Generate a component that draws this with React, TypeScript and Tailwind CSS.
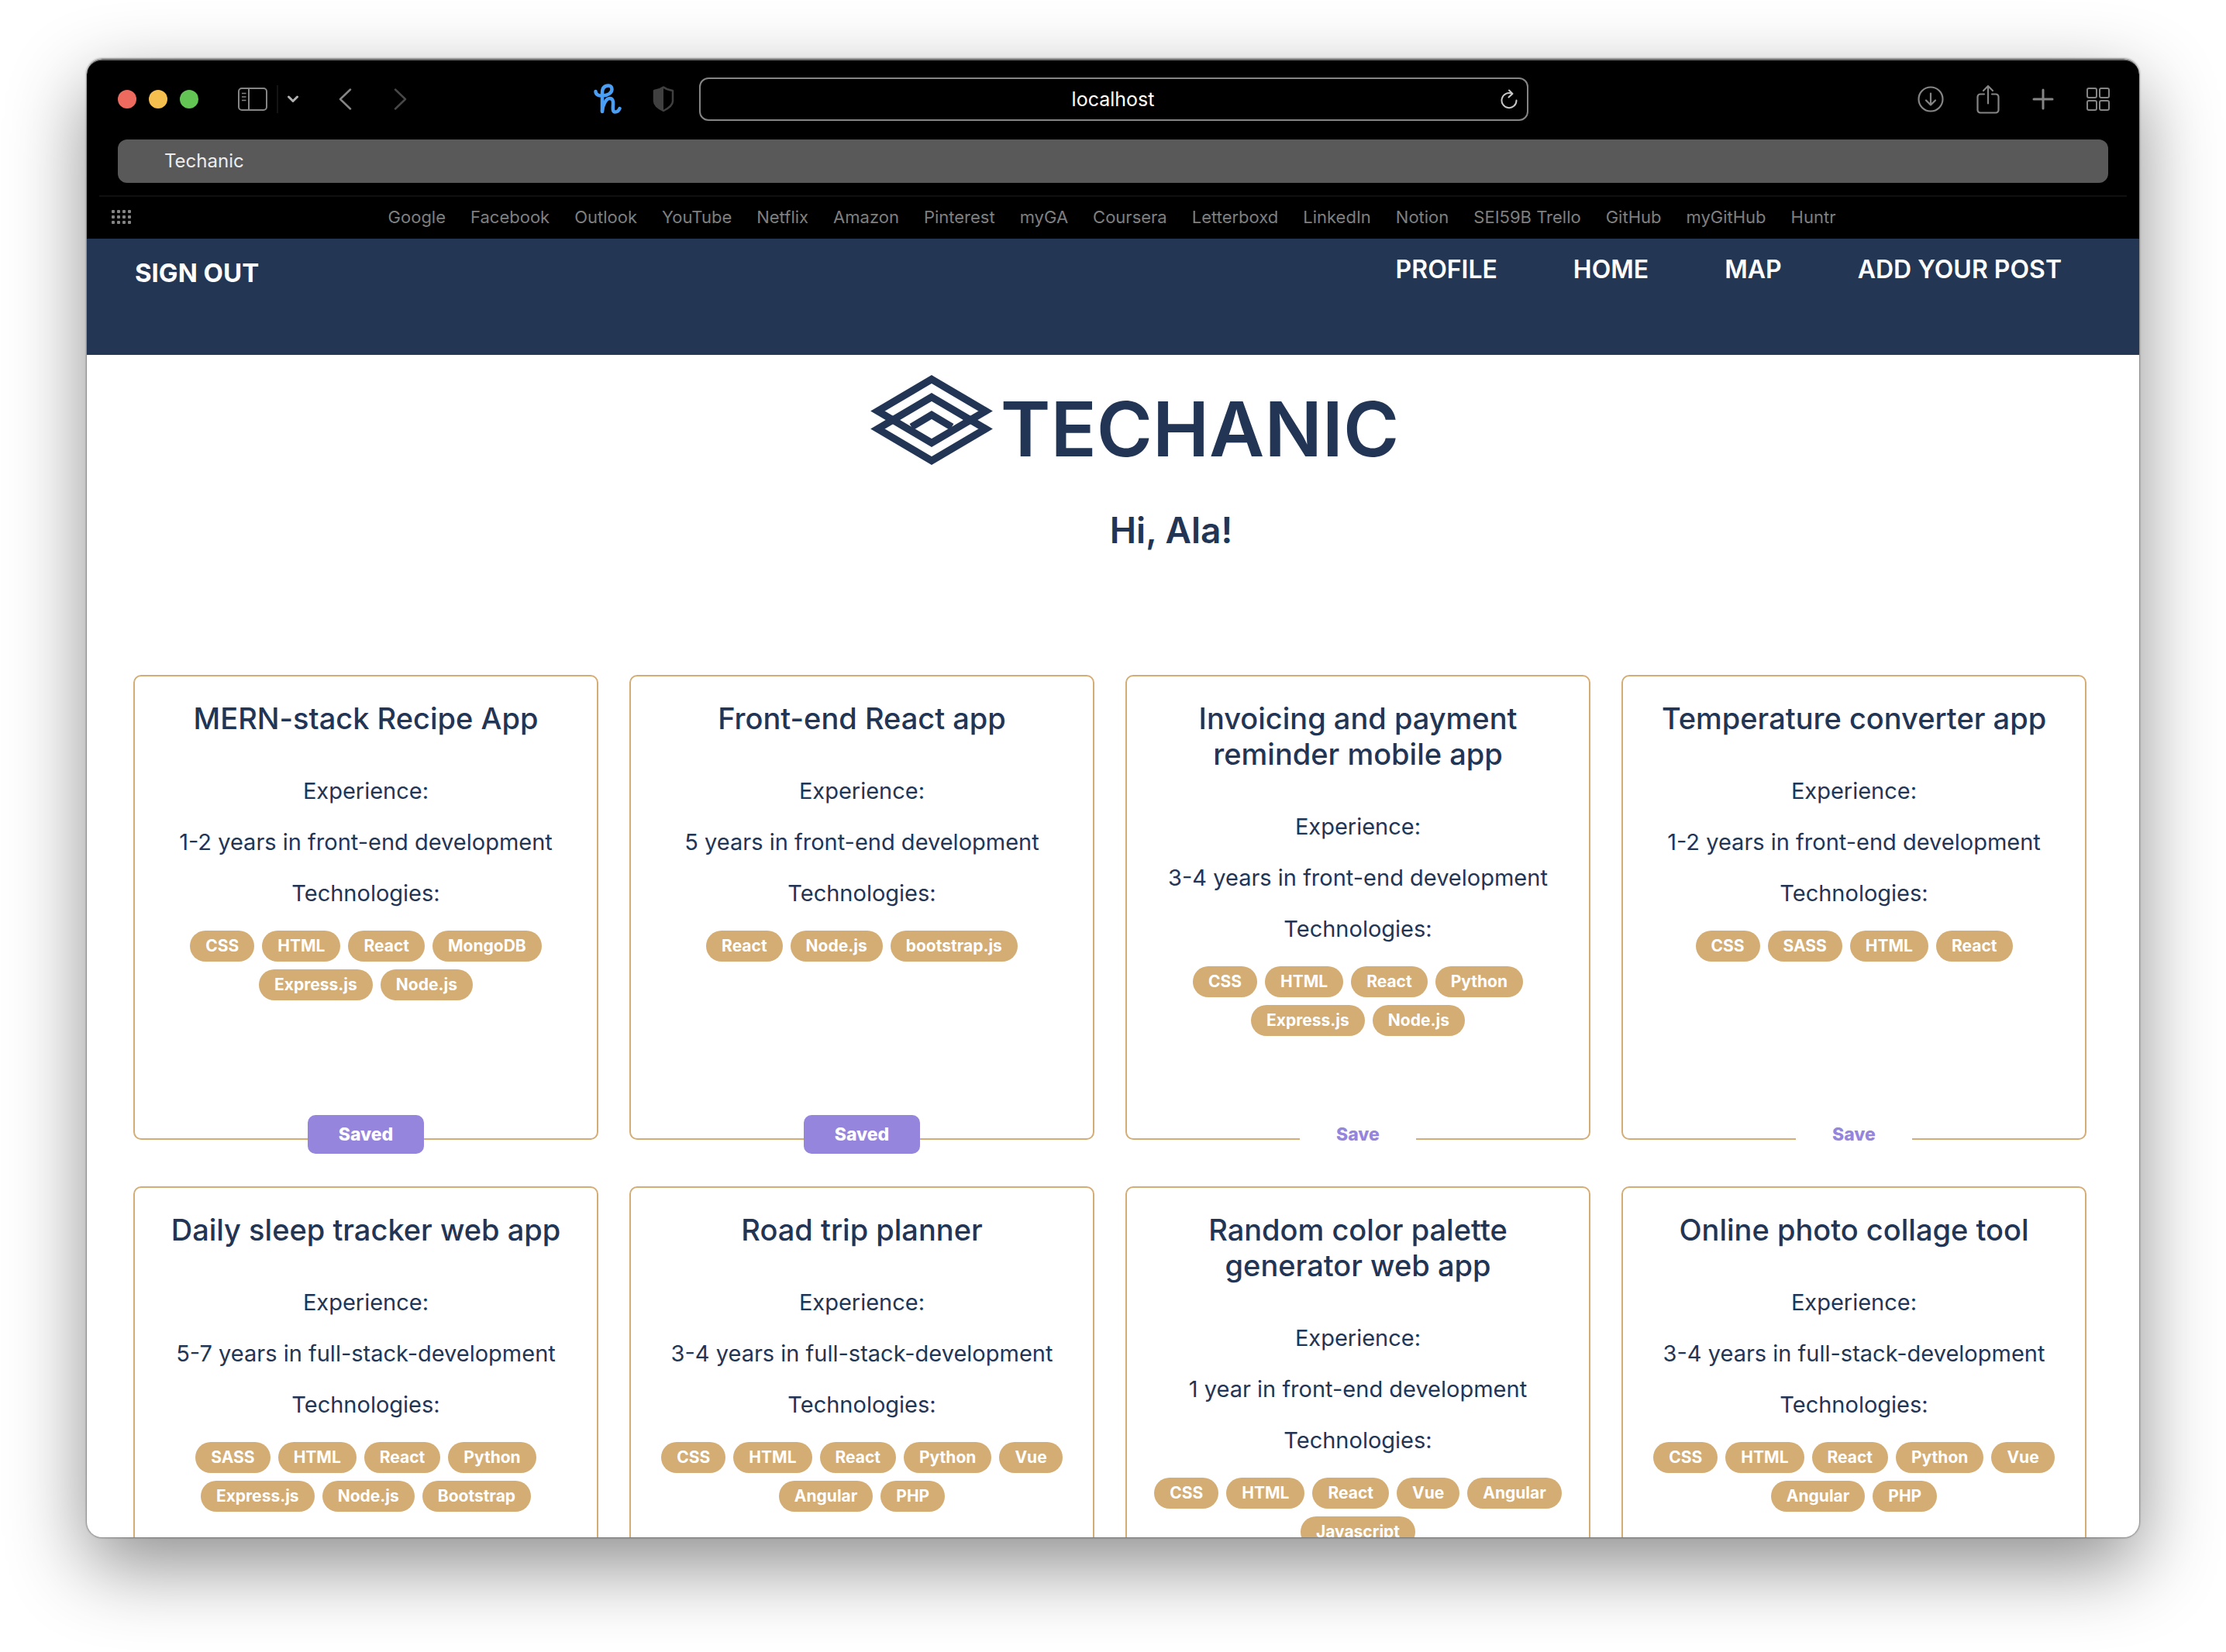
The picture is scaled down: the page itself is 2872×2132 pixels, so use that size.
import { useState } from "react";

type Post = {
  title: string;
  experience: string;
  technologies: string[];
  saved: boolean;
};

const bookmarks = [
  "Google",
  "Facebook",
  "Outlook",
  "YouTube",
  "Netflix",
  "Amazon",
  "Pinterest",
  "myGA",
  "Coursera",
  "Letterboxd",
  "LinkedIn",
  "Notion",
  "SEI59B Trello",
  "GitHub",
  "myGitHub",
  "Huntr",
];

const posts: Post[] = [
  {
    title: "MERN-stack Recipe App",
    experience: "1-2 years in front-end development",
    technologies: ["CSS", "HTML", "React", "MongoDB", "Express.js", "Node.js"],
    saved: true,
  },
  {
    title: "Front-end React app",
    experience: "5 years in front-end development",
    technologies: ["React", "Node.js", "bootstrap.js"],
    saved: true,
  },
  {
    title: "Invoicing and payment reminder mobile app",
    experience: "3-4 years in front-end development",
    technologies: ["CSS", "HTML", "React", "Python", "Express.js", "Node.js"],
    saved: false,
  },
  {
    title: "Temperature converter app",
    experience: "1-2 years in front-end development",
    technologies: ["CSS", "SASS", "HTML", "React"],
    saved: false,
  },
  {
    title: "Daily sleep tracker web app",
    experience: "5-7 years in full-stack-development",
    technologies: ["SASS", "HTML", "React", "Python", "Express.js", "Node.js", "Bootstrap"],
    saved: false,
  },
  {
    title: "Road trip planner",
    experience: "3-4 years in full-stack-development",
    technologies: ["CSS", "HTML", "React", "Python", "Vue", "Angular", "PHP"],
    saved: false,
  },
  {
    title: "Random color palette generator web app",
    experience: "1 year in front-end development",
    technologies: ["CSS", "HTML", "React", "Vue", "Angular", "Javascript"],
    saved: false,
  },
  {
    title: "Online photo collage tool",
    experience: "3-4 years in full-stack-development",
    technologies: ["CSS", "HTML", "React", "Python", "Vue", "Angular", "PHP"],
    saved: false,
  },
];

function SidebarIcon() {
  return (
    <svg width="38" height="30" viewBox="0 0 38 30" fill="none" stroke="#858585" strokeWidth="2">
      <rect x="1" y="1" width="36" height="28" rx="4" />
      <path d="M14 1v28" />
      <path d="M5 7.500h5.500M5 12h5.500M5 16.500h5.500" strokeWidth="1.500" />
    </svg>
  );
}

function SmallChevron() {
  return (
    <svg width="14" height="10" viewBox="0 0 14 10" fill="none" stroke="#b0b0b0" strokeWidth="3" strokeLinecap="round" strokeLinejoin="round">
      <path d="M1.500 2 7 7.500 12.500 2" />
    </svg>
  );
}

function BackIcon() {
  return (
    <svg width="17" height="28" viewBox="0 0 17 28" fill="none" stroke="#858585" strokeWidth="2.500" strokeLinecap="round" strokeLinejoin="round">
      <path d="M15 1.500 2 14l13 12.500" />
    </svg>
  );
}

function ForwardIcon() {
  return (
    <svg width="17" height="28" viewBox="0 0 17 28" fill="none" stroke="#474747" strokeWidth="2.500" strokeLinecap="round" strokeLinejoin="round">
      <path d="M2 1.500 15 14 2 26.500" />
    </svg>
  );
}

function HoneyIcon() {
  return (
    <svg width="36" height="40" viewBox="0 0 36 40" fill="none" stroke="#4a9ff5" strokeLinecap="round" strokeLinejoin="round">
      <path d="M2.500 10c0 4 4 6 9.500 5.500 7-.6 11.500-4 11.500-8.500 0-3-2-4.500-4.500-4.500C13.500 2.500 11 6 11 12v24" strokeWidth="4.500" />
      <path d="M11 35c1-8 5-16 9.500-16 4 0 4.800 3 4.500 8-.3 5-.8 9.500 2.500 9.500 3 0 5-2 6-4.500" strokeWidth="4.500" />
    </svg>
  );
}

function ShieldIcon() {
  return (
    <svg width="28" height="34" viewBox="0 0 28 34">
      <path
        d="M14 1.500c4 3 8 4 12 4.500v13.500c0 6-7 10-12 12.500C9 29.500 2 25.500 2 19.500V6c4-.5 8-1.500 12-4.500Z"
        fill="none"
        stroke="#404040"
        strokeWidth="2.500"
        strokeLinejoin="round"
      />
      <path d="M14 1.500V32C9 29.500 2 25.500 2 19.500V6c4-.5 8-1.500 12-4.500Z" fill="#404040" />
    </svg>
  );
}

function ReloadIcon() {
  return (
    <svg width="22" height="26" viewBox="0 0 22 26" fill="none" stroke="#c8c8c8" strokeWidth="2" strokeLinecap="round" strokeLinejoin="round">
      <path d="M20.500 14.500A9.500 9.500 0 1 1 15 6" />
      <path d="M11 1.500 15.500 6 10.500 10.500" />
    </svg>
  );
}

function DownloadIcon() {
  return (
    <svg width="34" height="34" viewBox="0 0 34 34" fill="none" stroke="#858585" strokeWidth="2.200" strokeLinecap="round" strokeLinejoin="round">
      <circle cx="17" cy="17" r="15.500" />
      <path d="M17 9.500v15M11 18.500l6 6 6-6" />
    </svg>
  );
}

function ShareIcon() {
  return (
    <svg width="30" height="38" viewBox="0 0 30 38" fill="none" stroke="#858585" strokeWidth="2.200" strokeLinecap="round" strokeLinejoin="round">
      <path d="M10 12.500H5a3.500 3.500 0 0 0-3.500 3.500v17A3.500 3.500 0 0 0 5 36.500h20a3.500 3.500 0 0 0 3.500-3.500V16a3.500 3.500 0 0 0-3.500-3.500h-5" />
      <path d="M15 24.500V2M9 8l6-6 6 6" />
    </svg>
  );
}

function PlusIcon() {
  return (
    <svg width="28" height="28" viewBox="0 0 28 28" fill="none" stroke="#858585" strokeWidth="3" strokeLinecap="round">
      <path d="M14 2v24M2 14h24" />
    </svg>
  );
}

function TabsIcon() {
  return (
    <svg width="30" height="30" viewBox="0 0 30 30" fill="none" stroke="#858585" strokeWidth="2">
      <rect x="1" y="1" width="12" height="12" rx="2" />
      <rect x="17" y="1" width="12" height="12" rx="2" />
      <rect x="1" y="17" width="12" height="12" rx="2" />
      <rect x="17" y="17" width="12" height="12" rx="2" />
    </svg>
  );
}

function DotsIcon() {
  return (
    <svg width="25" height="18" viewBox="0 0 25 18" fill="#858585">
      {[0, 7, 14].map((y) => [0, 7, 14, 21].map((x) => <rect key={`${x}-${y}`} x={x} y={y} width="4" height="4" rx="1" />))}
    </svg>
  );
}

function LogoMark() {
  return (
    <svg width="158" height="116" viewBox="0 0 158 116" fill="none" stroke="#223555" strokeWidth="9.500" strokeMiterlimit="10">
      <path d="M79 5.500 148.500 46.500 79 87.500 9.500 46.500Z" />
      <path d="M79 28.500 148.500 69.500 79 110.500 9.500 69.500Z" />
      <path d="M53 67 79 51.500 105 67" />
    </svg>
  );
}

function Toolbar() {
  return (
    <div className="flex h-[102px] items-center pr-[38px] pb-0.5 pl-10">
      <div className="flex flex-1 items-center">
        <div className="flex gap-4">
          <button aria-label="Close window" className="size-6 rounded-full bg-[#ed6a5e]" />
          <button aria-label="Minimise window" className="size-6 rounded-full bg-[#f5bf4f]" />
          <button aria-label="Zoom window" className="size-6 rounded-full bg-[#62c554]" />
        </div>
        <button aria-label="Toggle sidebar" className="ml-[51px]">
          <SidebarIcon />
        </button>
        <span className="ml-3 h-9 w-0.5 bg-[#141414]" />
        <button aria-label="Sidebar options" className="ml-3">
          <SmallChevron />
        </button>
        <button aria-label="Back" className="ml-[52px]">
          <BackIcon />
        </button>
        <button aria-label="Forward" className="ml-[54px]">
          <ForwardIcon />
        </button>
        <button aria-label="Honey" className="ml-auto">
          <HoneyIcon />
        </button>
        <button aria-label="Privacy report" className="mr-8 ml-10">
          <ShieldIcon />
        </button>
      </div>
      <div className="flex h-14 w-[1070px] items-center rounded-xl border-2 border-[#858585] pr-3 pl-8">
        <input
          aria-label="Address"
          defaultValue="localhost"
          className="w-full min-w-0 flex-1 bg-transparent pt-0.5 text-center text-[25px] text-white outline-none"
        />
        <button aria-label="Reload">
          <ReloadIcon />
        </button>
      </div>
      <div className="flex flex-1 items-center justify-end gap-[42px]">
        <button aria-label="Downloads">
          <DownloadIcon />
        </button>
        <button aria-label="Share">
          <ShareIcon />
        </button>
        <button aria-label="New tab">
          <PlusIcon />
        </button>
        <button aria-label="Show all tabs">
          <TabsIcon />
        </button>
      </div>
    </div>
  );
}

function BrowserChrome() {
  return (
    <header className="rounded-t-[20px] border-t-2 border-[#6b6b6b] bg-black">
      <Toolbar />
      <div className="px-10">
        <button className="flex h-14 w-full items-center rounded-xl bg-[#595959] pl-[60px] text-2xl text-[#ececec]">Techanic</button>
      </div>
      <div className="mx-4 mt-4 border-t-2 border-[#101010]" />
      <div className="flex h-[54px] items-center px-8 pb-0.5">
        <button aria-label="Show bookmarks">
          <DotsIcon />
        </button>
        <nav className="flex flex-1 justify-center gap-8 pr-7 text-[22px] text-[#7f7f7f]">
          {bookmarks.map((name) => (
            <a key={name} href="#">
              {name}
            </a>
          ))}
        </nav>
      </div>
    </header>
  );
}

function SiteNav() {
  return (
    <nav className="flex h-[150px] items-start justify-between bg-[#233654] pr-[100px] pl-[62px] text-white">
      <a href="#" className="mt-6 text-[33px] leading-10 font-bold">
        SIGN OUT
      </a>
      <div className="mt-5 flex gap-[98px] text-[32px] leading-10 font-semibold">
        <a href="#">PROFILE</a>
        <a href="#">HOME</a>
        <a href="#">MAP</a>
        <a href="#">ADD YOUR POST</a>
      </div>
    </nav>
  );
}

function PostCard({ post }: { post: Post }) {
  const [saved, setSaved] = useState(post.saved);
  return (
    <article className="relative aspect-square rounded-[10px] border-2 border-[#d4ad74] px-[30px] pt-[31px] text-center text-[29px] leading-9">
      <h2 className="mx-auto max-w-[520px] text-[38px] leading-[46px] font-medium">{post.title}</h2>
      <p className="mt-[53px]">Experience:</p>
      <p className="mt-[30px]">{post.experience}</p>
      <p className="mt-[30px]">Technologies:</p>
      <ul className="mt-[30px] flex flex-wrap justify-center gap-[10px]">
        {post.technologies.map((name) => (
          <li key={name} className="h-10 rounded-full bg-[#d4ad74] px-5 text-[21px] leading-10 font-bold text-white">
            {name}
          </li>
        ))}
      </ul>
      <button
        onClick={() => setSaved(!saved)}
        className={`absolute -bottom-5 left-1/2 h-[50px] w-[150px] -translate-x-1/2 rounded-[10px] text-[23px] font-extrabold ${
          saved ? "bg-[#9585dd] text-white" : "bg-white text-[#9585dd]"
        }`}
      >
        {saved ? "Saved" : "Save"}
      </button>
    </article>
  );
}

export default function App() {
  return (
    <div className="h-screen overflow-hidden bg-white px-28 pt-[76px] pb-[148px] font-['Inter',sans-serif]">
      <div className="h-full overflow-hidden rounded-[20px] bg-white text-[#223555] shadow-[0_0_2px_1px_rgba(0,0,0,0.35),0_36px_100px_rgba(0,0,0,0.45)]">
        <BrowserChrome />
        <SiteNav />
        <main>
          <div className="flex items-start justify-center gap-2.5 pt-[26px] pl-14">
            <LogoMark />
            <span className="mt-[18px] text-[98px] leading-[104px] font-semibold">TECHANIC</span>
          </div>
          <h1 className="mt-[50px] pl-[150px] text-center text-[46px] leading-[56px] font-semibold">Hi, Ala!</h1>
          <section className="mt-[159px] grid grid-cols-4 gap-x-10 gap-y-[60px] pr-[68px] pl-[60px]">
            {posts.map((post) => (
              <PostCard key={post.title} post={post} />
            ))}
          </section>
        </main>
      </div>
    </div>
  );
}
